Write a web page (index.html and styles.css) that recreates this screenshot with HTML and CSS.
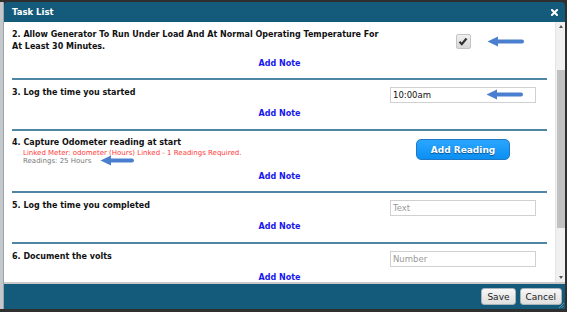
FILE: index.html
```html
<!DOCTYPE html>
<html lang="en">
<head>
    <meta charset="UTF-8">
    <title>Task List</title>
    <link rel="stylesheet" href="styles.css">
</head>
<body>

    <div class="dialog">
        <div class="dialog-header">
            <span class="dialog-title">Task List</span>
            <svg class="close-icon" width="7" height="7" viewBox="0 0 7 7">
                <path d="M1 1 L6 6 M6 1 L1 6" stroke="#fff" stroke-width="2" stroke-linecap="square"/>
            </svg>
        </div>

        <div class="dialog-body">
            <div class="task-list">

                <div class="task task-first">
                    <div class="task-head">
                        <div class="task-title">2. Allow Generator To Run Under Load And At Normal Operating Temperature For<br>At Least 30 Minutes.</div>
                        <div class="task-control control-middle">
                            <span class="checkbox">
                                <svg width="10" height="9" viewBox="0 0 10 9">
                                    <path d="M1.5 4.8 L3.8 7.2 L8.5 1.5" fill="none" stroke="#333" stroke-width="2.2"/>
                                </svg>
                            </span>
                            <svg class="arrow arrow-check" width="37" height="11" viewBox="0 0 37 11">
                                <path d="M10 5.5 H35" stroke="#4a7fd0" stroke-width="4" stroke-linecap="round"/>
                                <path d="M0.5 5.5 L11 0.5 L11 10.5 Z" fill="#4a7fd0"/>
                            </svg>
                        </div>
                    </div>
                    <a class="add-note" href="#">Add Note</a>
                </div>

                <div class="task">
                    <div class="task-head">
                        <div class="task-title">3. Log the time you started</div>
                        <div class="task-control">
                            <input class="field" type="text" value="10:00am">
                            <svg class="arrow arrow-field" width="37" height="11" viewBox="0 0 37 11">
                                <path d="M10 5.5 H35" stroke="#4a7fd0" stroke-width="4" stroke-linecap="round"/>
                                <path d="M0.5 5.5 L11 0.5 L11 10.5 Z" fill="#4a7fd0"/>
                            </svg>
                        </div>
                    </div>
                    <a class="add-note" href="#">Add Note</a>
                </div>

                <div class="task task-meter">
                    <div class="task-head">
                        <div class="task-title">
                            4. Capture Odometer reading at start
                            <div class="meter-linked">Linked Meter: odometer (Hours) Linked - 1 Readings Required.</div>
                            <div class="meter-readings">Readings: 25 Hours
                                <svg class="arrow-inline" width="34" height="11" viewBox="0 0 34 11">
                                    <path d="M10 5.5 H32" stroke="#4a7fd0" stroke-width="4" stroke-linecap="round"/>
                                    <path d="M0.5 5.5 L11 0.5 L11 10.5 Z" fill="#4a7fd0"/>
                                </svg>
                            </div>
                        </div>
                        <div class="task-control">
                            <button class="reading-button">Add Reading</button>
                        </div>
                    </div>
                    <a class="add-note" href="#">Add Note</a>
                </div>

                <div class="task">
                    <div class="task-head">
                        <div class="task-title">5. Log the time you completed</div>
                        <div class="task-control">
                            <input class="field" type="text" placeholder="Text">
                        </div>
                    </div>
                    <a class="add-note" href="#">Add Note</a>
                </div>

                <div class="task">
                    <div class="task-head">
                        <div class="task-title">6. Document the volts</div>
                        <div class="task-control">
                            <input class="field" type="text" placeholder="Number">
                        </div>
                    </div>
                    <a class="add-note" href="#">Add Note</a>
                </div>

            </div>

            <div class="scrollbar">
                <span class="scroll-up"></span>
                <span class="scroll-thumb"></span>
                <span class="scroll-down"></span>
            </div>
        </div>

        <div class="dialog-footer">
            <button class="footer-button">Save</button>
            <button class="footer-button">Cancel</button>
            <svg class="grip" width="5" height="5" viewBox="0 0 5 5">
                <path d="M0 5 L5 0 M2.5 5 L5 2.5" stroke="#7fa3b8" stroke-width="0.8"/>
            </svg>
        </div>
    </div>

</body>
</html>
```

FILE: styles.css
```css
body {
    margin: 0;
    padding: 0;
    width: 567px;
    height: 312px;
    overflow: hidden;
    background-color: #2f2f2f;
    font-family: "DejaVu Sans", Verdana, sans-serif;
}
.dialog {
    margin: 2px 2px 3px 3px;
    height: 307px;
    display: flex;
    flex-direction: column;
    border-left: 1px solid #9ea3a7;
    box-shadow: -3px 0 0 #c3c8cc;
}
.dialog-header {
    height: 20px;
    background-color: #135a7b;
    border-radius: 4px 4px 0 0;
    display: flex;
    align-items: center;
    justify-content: space-between;
    padding: 0 7px 0 8px;
}
.dialog-title {
    color: #fff;
    font-weight: bold;
    font-size: 8.5px;
}
.dialog-body {
    height: 260px;
    display: flex;
    background-color: #fff;
    border-bottom: 2px solid #c9c9c9;
}
.task-list {
    flex: 1;
    overflow: hidden;
    padding: 7px 8px 0 8px;
}
.task {
    display: flex;
    flex-direction: column;
    padding: 7px 0 9px 0;
    border-bottom: 2px solid #4f86a3;
}
.task-first {
    padding-top: 0;
    padding-bottom: 8px;
}
.task-meter {
    padding-top: 6px;
    padding-bottom: 8px;
}
.task-head {
    display: flex;
    align-items: flex-start;
    padding-right: 11px;
    min-height: 16px;
}
.task-title {
    flex: 1;
    font-size: 8px;
    font-weight: bold;
    line-height: 12px;
    color: #111;
    white-space: nowrap;
}
.task-control {
    position: relative;
    width: 146px;
    display: flex;
    justify-content: center;
}
.control-middle {
    align-self: center;
}
.checkbox {
    width: 13px;
    height: 13px;
    border: 1px solid #c4c4c4;
    border-radius: 2px;
    background: linear-gradient(#f0f0f0, #d8d8d8);
    display: flex;
    align-items: center;
    justify-content: center;
}
.arrow {
    position: absolute;
}
.arrow-check {
    left: 97px;
    top: 2px;
}
.arrow-field {
    left: 96px;
    top: 2px;
}
.arrow-inline {
    vertical-align: middle;
    margin-left: 6px;
    margin-top: -2px;
}
.field {
    box-sizing: border-box;
    width: 146px;
    height: 16px;
    margin: 0;
    border: 1px solid #d0d0d0;
    padding: 0 2px;
    font-family: "DejaVu Sans", Verdana, sans-serif;
    font-size: 8.5px;
    color: #111;
    outline: none;
}
.field::placeholder {
    color: #9a9a9a;
}
.meter-linked {
    font-weight: normal;
    font-size: 7px;
    line-height: 8px;
    color: #ff3a3a;
    padding-left: 11px;
}
.meter-readings {
    font-weight: normal;
    font-size: 7px;
    line-height: 8px;
    color: #7a7a7a;
    padding-left: 11px;
}
.reading-button {
    margin-top: 2px;
    width: 94px;
    height: 21px;
    border: 1px solid #2378c4;
    border-radius: 5px;
    background: linear-gradient(#2ba6ff, #0b8ff2);
    color: #fff;
    font-family: "DejaVu Sans", Verdana, sans-serif;
    font-weight: bold;
    font-size: 9px;
    text-shadow: 0 1px 1px #0b4f8a;
    padding: 0;
}
.add-note {
    align-self: center;
    margin-top: 5px;
    font-size: 8px;
    font-weight: bold;
    line-height: 12px;
    color: #1616f0;
    text-decoration: none;
}
.scrollbar {
    width: 9px;
    background-color: #f0f0f0;
    border-left: 1px solid #e4e4e4;
    display: flex;
    flex-direction: column;
    align-items: center;
}
.scroll-up {
    margin-top: 3px;
    border-left: 2px solid transparent;
    border-right: 2px solid transparent;
    border-bottom: 3px solid #555;
}
.scroll-thumb {
    margin-top: 42px;
    width: 8px;
    height: 158px;
    background-color: #c1c1c1;
}
.scroll-down {
    margin-top: auto;
    margin-bottom: 3px;
    border-left: 2px solid transparent;
    border-right: 2px solid transparent;
    border-top: 3px solid #555;
}
.dialog-footer {
    flex: 1;
    background-color: #135a7b;
    display: flex;
    align-items: center;
    justify-content: flex-end;
    gap: 4px;
    padding-right: 3px;
    position: relative;
}
.footer-button {
    height: 17px;
    padding: 0 5px;
    border: 1px solid #a9b3b9;
    border-radius: 3px;
    background: linear-gradient(#f7f7f7, #dedede);
    font-family: "DejaVu Sans", Verdana, sans-serif;
    font-size: 9px;
    color: #222;
}
.grip {
    position: absolute;
    right: 1px;
    bottom: 1px;
}
```
